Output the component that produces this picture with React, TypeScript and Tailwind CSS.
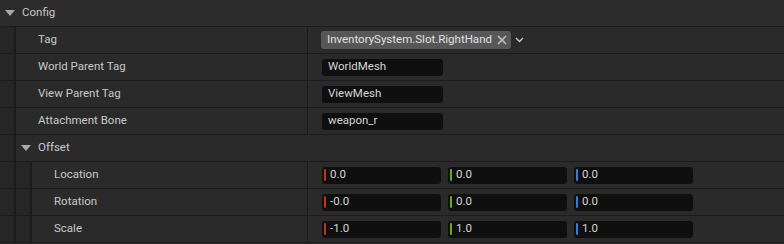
import React from "react";

// Details panel: Config category

type Vec = { label: string; x: string; y: string; z: string };

const textRows = [
  { label: "World Parent Tag", value: "WorldMesh" },
  { label: "View Parent Tag", value: "ViewMesh" },
  { label: "Attachment Bone", value: "weapon_r" },
];

const vecRows: Vec[] = [
  { label: "Location", x: "0.0", y: "0.0", z: "0.0" },
  { label: "Rotation", x: "-0.0", y: "0.0", z: "0.0" },
  { label: "Scale", x: "-1.0", y: "1.0", z: "1.0" },
];

function Caret() {
  return (
    <svg width="10" height="6" viewBox="0 0 10 6" className="shrink-0">
      <path d="M0 0 L10 0 L5 6 Z" fill="#a8a8a8" />
    </svg>
  );
}

function Indent() {
  return <div className="h-full w-[16px] shrink-0 border-r-2 border-[#1c1c1c] bg-[#262626]" />;
}

function Row({
  depth,
  label,
  children,
}: {
  depth: number;
  label: string;
  children?: React.ReactNode;
}) {
  return (
    <div className="flex h-[27px] border-b border-[#1c1c1c] bg-[#2a2a2a]">
      <Indent />
      {depth > 1 && <Indent />}
      <div className="flex h-full w-full min-w-0 items-center">
        <div
          className="flex h-full shrink-0 items-center border-r border-[#1c1c1c] pl-[22px]"
          style={{ width: depth > 1 ? 276 : 292 }}
        >
          <span className="text-[11.5px] text-[#c8c8c8]">{label}</span>
        </div>
        <div className="flex h-full items-center pl-[13px]">{children}</div>
      </div>
    </div>
  );
}

function TextBox({ value }: { value: string }) {
  return (
    <div className="flex h-[19px] w-[123px] items-center rounded-[4px] border border-[#2a2a2a] bg-[#0f0f0f] pl-[6px] text-[11.5px] text-[#d4d4d4]">
      {value}
    </div>
  );
}

function AxisBox({ value, color }: { value: string; color: string }) {
  return (
    <div className="flex h-[19px] w-[121px] items-center rounded-[4px] border border-[#2a2a2a] bg-[#0f0f0f] pl-[2px] text-[11.5px] text-[#d4d4d4]">
      <span className={`mr-[4px] h-[12px] w-[2px] rounded-[1px] ${color}`} />
      {value}
    </div>
  );
}

export default function App() {
  return (
    <div
      className="h-[244px] w-[784px] overflow-hidden bg-[#2a2a2a]"
      style={{ fontFamily: "Roboto, 'Liberation Sans', sans-serif" }}
    >
      <div className="flex h-[27px] items-center gap-[7px] border-b border-[#1c1c1c] bg-[#2c2c2c] pl-[5px]">
        <Caret />
        <span className="text-[11.5px] text-[#c8c8c8]">Config</span>
      </div>

      <Row depth={1} label="Tag">
        <div className="flex items-center gap-[4px]">
          <div className="flex h-[18px] shrink-0 items-center rounded-[3px] bg-[#575757] pl-[6px] pr-[4px] text-[11.5px] text-[#e0e0e0]">
            <span className="whitespace-nowrap">InventorySystem.Slot.RightHand</span>
            <svg width="10" height="10" viewBox="0 0 10 10" className="ml-[5px] shrink-0">
              <path d="M1 1 L9 9 M9 1 L1 9" stroke="#c8c8c8" strokeWidth="1.4" />
            </svg>
          </div>
          <svg width="9" height="6" viewBox="0 0 9 6" className="shrink-0">
            <path d="M1 1 L4.5 4.5 L8 1" stroke="#c8c8c8" strokeWidth="1.4" fill="none" />
          </svg>
        </div>
      </Row>

      {textRows.map((r) => (
        <Row key={r.label} depth={1} label={r.label}>
          <TextBox value={r.value} />
        </Row>
      ))}

      <div className="flex h-[27px] border-b border-[#1c1c1c] bg-[#2a2a2a]">
        <Indent />
        <div className="flex h-full items-center gap-[7px] pl-[5px]">
          <Caret />
          <span className="text-[11.5px] text-[#c8c8c8]">Offset</span>
        </div>
      </div>

      {vecRows.map((r) => (
        <Row key={r.label} depth={2} label={r.label}>
          <div className="flex gap-[5px]">
            <AxisBox value={r.x} color="bg-[#c4320f]" />
            <AxisBox value={r.y} color="bg-[#6ea80c]" />
            <AxisBox value={r.z} color="bg-[#2c7fe0]" />
          </div>
        </Row>
      ))}
    </div>
  );
}
